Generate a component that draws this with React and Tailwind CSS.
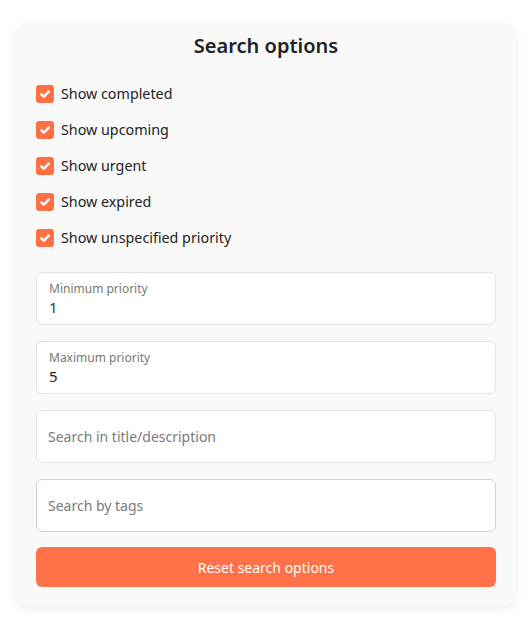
import React from "react";

const options = [
  "Show completed",
  "Show upcoming",
  "Show urgent",
  "Show expired",
  "Show unspecified priority",
];

function Check() {
  return (
    <span className="flex h-[18px] w-[18px] items-center justify-center rounded-[3px] bg-[#ff7043]">
      <svg width="12" height="12" viewBox="0 0 12 12" fill="none">
        <path d="M2.3 6.3 L4.9 8.7 L9.7 3.6" stroke="white" strokeWidth="2.4" strokeLinecap="round" strokeLinejoin="round" />
      </svg>
    </span>
  );
}

export default function App() {
  return (
    <div className="min-h-[631px] w-[531px] bg-white px-4 pt-6" style={{ fontFamily: '"Noto Sans", "Open Sans", sans-serif' }}>
      <div className="w-[500px] rounded-xl bg-[#f9f9f9] px-5 pt-2 pb-[19px] shadow-[0_2px_10px_rgba(0,0,0,0.08)]">
        <h2 className="h-7 text-center text-[20px] font-semibold leading-7 text-[#222]">Search options</h2>
        <div className="mt-4 flex flex-col">
          {options.map((o) => (
            <label key={o} className="flex h-9 items-center gap-[7px]">
              <Check />
              <span className="text-[14.3px] text-[#222]">{o}</span>
            </label>
          ))}
        </div>
        <div className="mt-4 flex flex-col gap-4">
          <div className="flex h-[53px] flex-col justify-center rounded-md border border-[#e4e4e4] bg-white px-3">
            <span className="text-[12px] leading-4 text-[#777]">Minimum priority</span>
            <span className="text-[15px] leading-5 text-[#1d3a64]">1</span>
          </div>
          <div className="flex h-[53px] flex-col justify-center rounded-md border border-[#e4e4e4] bg-white px-3">
            <span className="text-[12px] leading-4 text-[#777]">Maximum priority</span>
            <span className="text-[15px] leading-5 text-[#222]">5</span>
          </div>
          <div className="flex h-[53px] items-center rounded-md border border-[#e4e4e4] bg-white px-[11px]">
            <span className="text-[14px] text-[#7a7a7a]">Search in title/description</span>
          </div>
          <div className="flex h-[53px] items-center rounded-md border border-[#d4d4d4] bg-white px-[11px]">
            <span className="text-[14px] text-[#7a7a7a]">Search by tags</span>
          </div>
        </div>
        <button className="mt-[15px] flex h-10 w-full items-center justify-center rounded-md bg-[#ff7249] text-[14px] text-white">
          Reset search options
        </button>
      </div>
    </div>
  );
}
